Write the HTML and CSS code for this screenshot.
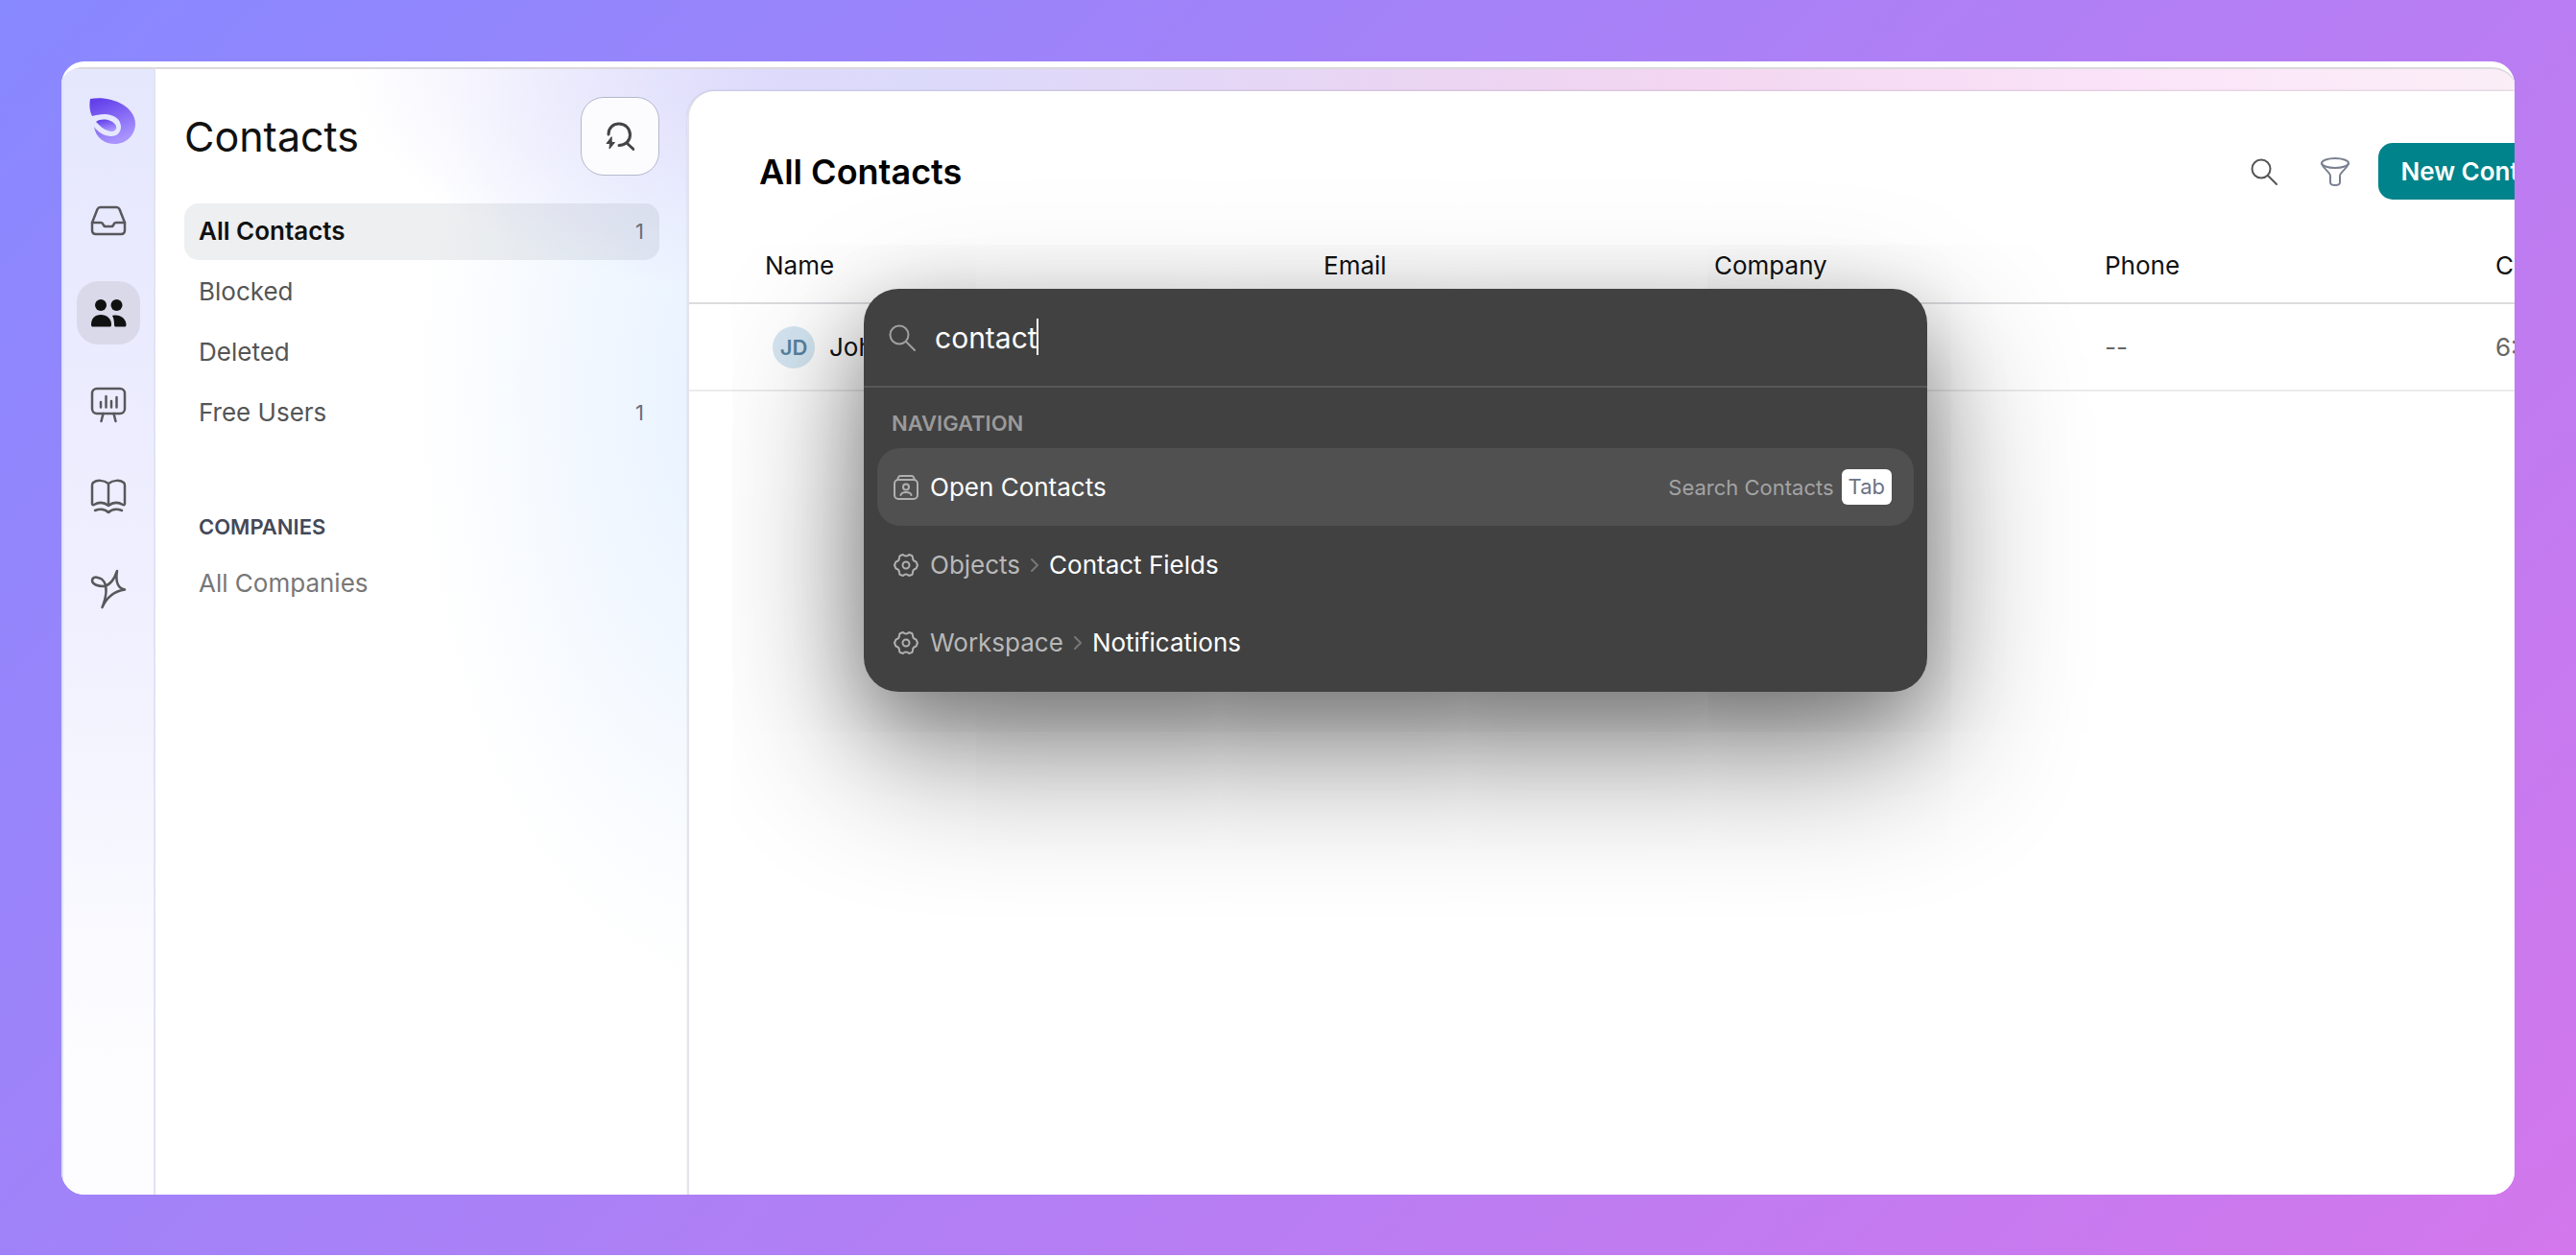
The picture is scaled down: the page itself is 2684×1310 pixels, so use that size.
FILE: index.html
```html
<!DOCTYPE html>
<html lang="en">
<head>
    <meta charset="UTF-8">
    <meta name="viewport" content="width=device-width, initial-scale=1.0">
    <title>Contacts</title>
    <link rel="stylesheet" href="styles.css">
</head>
<body>
    <div class="window">
        <nav class="rail" aria-label="Main">
            <a class="logo" href="#" aria-label="Home">
                <svg width="48" height="48" viewBox="0 0 48 48">
                    <defs>
                        <linearGradient id="logo-fill" x1="0" y1="0" x2="0.4" y2="1">
                            <stop offset="0.1" stop-color="#6340ea"/>
                            <stop offset="1" stop-color="#a893ff"/>
                        </linearGradient>
                    </defs>
                    <path fill="url(#logo-fill)" d="M1 1C12-1 25 1 35 7C43 12 48 19 48 27C48 39 38 48 27 48C16 48 7 42 5 30C9 36 16 40 23 40C29 40 33 36 33 30C33 22 25 17 16 17C11 17 7 18 3 19C0 13 0 6 1 1Z"/>
                    <path fill="url(#logo-fill)" d="M7 25C11 22 17 22 22 24C27 26 29 30 28 32C27 35 23 36 19 34C15 33 11 29 7 25Z"/>
                </svg>
            </a>
            <a class="rail-link" href="#" aria-label="Inbox">
                <svg width="38" height="38" viewBox="0 0 38 38">
                    <path d="M10.500 5H27.500C29 5 30 6 30.500 7L36 21V29C36 31.500 34.500 33 32 33H6C3.500 33 2 31.500 2 29V21L7.500 7C8 6 9 5 10.500 5Z"/>
                    <path d="M2 21H11C12.500 21 13 21.500 13.500 23C14 24.500 14.500 25 16 25H22C23.500 25 24 24.500 24.500 23C25 21.500 25.500 21 27 21H36"/>
                </svg>
            </a>
            <a class="rail-link active" href="#" aria-label="Contacts">
                <svg class="solid" width="38" height="38" viewBox="0 0 38 38">
                    <circle cx="11" cy="11" r="6"/>
                    <circle cx="27.500" cy="11" r="6"/>
                    <path d="M1 31C1 25 5 21 11 21C17 21 22 25 22 31C22 33 21.500 33.500 20 33.500H3C1.500 33.500 1 33 1 31Z"/>
                    <path d="M23 22C31 20 37 25 37.500 31C37.500 33 37 33.500 35.500 33.500H27C25.500 33.500 25 33 25 31C25 28 24.500 24.500 23 22Z"/>
                </svg>
            </a>
            <a class="rail-link" href="#" aria-label="Reports">
                <svg width="38" height="38" viewBox="0 0 38 38">
                    <rect x="2" y="2" width="34" height="26" rx="5"/>
                    <path d="M13.500 28L11.500 36M24.500 28L26.500 36M11 16V21.500M16.500 10V21.500M22 15V21.500M27.500 11V21.500"/>
                </svg>
            </a>
            <a class="rail-link" href="#" aria-label="Help center">
                <svg width="38" height="38" viewBox="0 0 38 38">
                    <path d="M19 5V28M19 5C14 1 7 1 3 4C2 5 2 5.500 2 7V26C2 27 3 27.500 4 27C9 24 14 24 19 28C24 24 29 24 34 27C35 27.500 36 27 36 26V7C36 5.500 36 5 35 4C31 1 24 1 19 5Z"/>
                    <path d="M5 33C10 31 15 31 19 35C23 31 28 31 33 33"/>
                </svg>
            </a>
            <a class="rail-link" href="#" aria-label="Assistant">
                <svg width="38" height="42" viewBox="0 0 38 42">
                    <path d="M28 2C25 11 21 17 14 18C8 18 2 16 2 12C2 9 5 8 8 9C14 10 17 16 16.500 24C16 31 14 36 12.500 40C17 30 25 23 36 21.500C29 20 26 14 28 2Z"/>
                </svg>
            </a>
        </nav>

        <aside class="sidebar">
            <div class="sidebar-head">
                <h1>Contacts</h1>
                <button class="quick-search" type="button" aria-label="Quick search">
                    <svg width="30" height="30" viewBox="0 0 30 30">
                        <path d="M3 13C3 6 8 2 14 2C20.500 2 25.500 7 25.500 13.500C25.500 20 20.500 24.500 14 24.500M22 22L29 28.500"/>
                        <path class="bolt" d="M6 16L1 22.500H4.500L4 28L9.500 21.500H6.500Z"/>
                    </svg>
                </button>
            </div>
            <ul class="lists">
                <li><a class="list-link active" href="#">All Contacts <span class="count">1</span></a></li>
                <li><a class="list-link" href="#">Blocked</a></li>
                <li><a class="list-link" href="#">Deleted</a></li>
                <li><a class="list-link" href="#">Free Users <span class="count">1</span></a></li>
            </ul>
            <h2>COMPANIES</h2>
            <ul class="lists">
                <li><a class="list-link muted" href="#">All Companies</a></li>
            </ul>
        </aside>

        <main class="panel">
            <div class="panel-head">
                <h2>All Contacts</h2>
                <button class="icon-button" type="button" aria-label="Search">
                    <svg width="30" height="30" viewBox="0 0 30 30">
                        <circle cx="12" cy="12" r="9.500"/>
                        <path d="M19 19L28 28"/>
                    </svg>
                </button>
                <button class="icon-button filter" type="button" aria-label="Filter">
                    <svg width="30" height="30" viewBox="0 0 30 30">
                        <ellipse cx="15" cy="6" rx="14" ry="5"/>
                        <path d="M1 6C1 10 10 16 10 19V26C10 28 12 29 15 29C18 29 20 28 20 26V19C20 16 29 10 29 6"/>
                    </svg>
                </button>
                <button class="new-contact" type="button">New Contact</button>
            </div>
            <table class="contacts">
                <thead>
                    <tr>
                        <th class="name-col">Name</th>
                        <th>Email</th>
                        <th>Company</th>
                        <th>Phone</th>
                        <th>Created</th>
                    </tr>
                </thead>
                <tbody>
                    <tr>
                        <td class="name-col"><div class="person"><span class="avatar">JD</span>John Doe</div></td>
                        <td></td>
                        <td></td>
                        <td>--</td>
                        <td>6:24 PM</td>
                    </tr>
                </tbody>
            </table>
        </main>

        <div class="palette" role="dialog" aria-label="Command palette">
            <label class="palette-search">
                <svg width="28" height="28" viewBox="0 0 28 28">
                    <circle cx="11" cy="11" r="9.500"/>
                    <path d="M18 18L27 27"/>
                </svg>
                <input type="text" id="palette-input" value="contact" aria-label="Search commands">
                <span class="caret"></span>
            </label>
            <div class="palette-body">
                <h3>NAVIGATION</h3>
                <a class="result selected" href="#">
                    <svg width="26" height="26" viewBox="0 0 26 26">
                        <path d="M4 5L5 2.500C5.500 1.500 6 1 7 1H19C20 1 20.500 1.500 21 2.500L22 5"/>
                        <rect x="1" y="5" width="24" height="20" rx="4"/>
                        <circle cx="13" cy="12.500" r="3"/>
                        <path d="M7.500 21C8 18.500 10 18 13 18C16 18 18 18.500 18.500 21"/>
                    </svg>
                    <span>Open Contacts</span>
                    <span class="hint">Search Contacts</span>
                    <kbd>Tab</kbd>
                </a>
                <a class="result" href="#">
                    <svg width="26" height="26" viewBox="0 0 26 26">
                        <path d="M10 2C11.500 4 14.500 4 16 2L19 3C20 3.500 20 4 20 5.500C20 7.500 21 9 23.500 9.500L25 13L23.500 16.500C21 17 20 18.500 20 20.500C20 22 20 22.500 19 23L16 24C14.500 22 11.500 22 10 24L7 23C6 22.500 6 22 6 20.500C6 18.500 5 17 2.500 16.500L1 13L2.500 9.500C5 9 6 7.500 6 5.500C6 4 6 3.500 7 3Z"/>
                        <circle cx="13" cy="13" r="3.500"/>
                    </svg>
                    <span class="parent">Objects</span>
                    <svg class="chevron" width="8" height="14" viewBox="0 0 8 14"><path d="M1 1L7 7L1 13"/></svg>
                    <span>Contact Fields</span>
                </a>
                <a class="result" href="#">
                    <svg width="26" height="26" viewBox="0 0 26 26">
                        <path d="M10 2C11.500 4 14.500 4 16 2L19 3C20 3.500 20 4 20 5.500C20 7.500 21 9 23.500 9.500L25 13L23.500 16.500C21 17 20 18.500 20 20.500C20 22 20 22.500 19 23L16 24C14.500 22 11.500 22 10 24L7 23C6 22.500 6 22 6 20.500C6 18.500 5 17 2.500 16.500L1 13L2.500 9.500C5 9 6 7.500 6 5.500C6 4 6 3.500 7 3Z"/>
                        <circle cx="13" cy="13" r="3.500"/>
                    </svg>
                    <span class="parent">Workspace</span>
                    <svg class="chevron" width="8" height="14" viewBox="0 0 8 14"><path d="M1 1L7 7L1 13"/></svg>
                    <span>Notifications</span>
                </a>
            </div>
        </div>
    </div>
</body>
</html>
```
FILE: styles.css
```css
* {
    margin: 0;
    padding: 0;
    box-sizing: border-box;
}

body {
    height: 100vh;
    padding: 64px 64px 63px;
    overflow: hidden;
    display: flex;
    font-family: Inter, "Liberation Sans", sans-serif;
    font-size: 26px;
    line-height: 32px;
    color: #111;
    background: linear-gradient(135deg, #8888ff, #d377ec);
    border-bottom: 2px solid #fff;
}

a {
    color: inherit;
    text-decoration: none;
}

button {
    font: inherit;
    border: none;
    background: none;
    cursor: pointer;
}

svg {
    display: block;
    flex: none;
    fill: none;
    stroke: currentColor;
    stroke-width: 2;
    stroke-linecap: round;
    stroke-linejoin: round;
}

ul {
    list-style: none;
}

.window {
    position: relative;
    flex: 1;
    min-width: 0;
    display: flex;
    overflow: hidden;
    border-radius: 24px;
    border-top: 6px solid #fff;
    box-shadow: inset 0 2px #dcd9dc;
    background:
        linear-gradient(90deg, rgba(220, 217, 251, 0) 653px, #dcdafb 900px, #ead5f3 1400px, #f3d6f1 1700px, #fbe5f9 2200px, #fbeef7) top / 100% 60px no-repeat,
        radial-gradient(ellipse 480px 240px at 780px 0, #dcd8fb, rgba(220, 216, 251, 0) 100%),
        radial-gradient(ellipse 330px 620px at 700px 340px, #e6f1ff, rgba(230, 241, 255, 0) 100%),
        #fff;
}

/* Icon rail */
.rail {
    width: 98px;
    flex: none;
    display: flex;
    flex-direction: column;
    align-items: center;
    gap: 30px;
    padding-top: 30px;
    color: #58585c;
    border-top: 2px solid #dbd9dc;
    border-left: 2px solid #dde3fb;
    border-right: 2px solid #e1e3f3;
    background: linear-gradient(#e5e7fd, #efefff 45%, #fdfdff 88%);
}

.logo {
    margin: 0 0 17px 8px;
}

.logo svg {
    stroke: none;
}

.rail-link {
    width: 66px;
    height: 66px;
    display: flex;
    align-items: center;
    justify-content: center;
    border-radius: 22px;
}

.rail-link svg {
    stroke-width: 2.5;
}

.rail-link.active {
    color: #111;
    background: #d9d9ea;
}

.rail-link .solid {
    fill: currentColor;
    stroke: none;
}

/* Lists sidebar */
.sidebar {
    width: 554px;
    flex: none;
    padding: 31px 29px 0 30px;
}

.sidebar-head {
    display: flex;
    align-items: center;
    justify-content: space-between;
    margin-bottom: 29px;
}

.sidebar h1 {
    font-size: 43px;
    line-height: 48px;
    font-weight: 400;
}

.quick-search {
    width: 82px;
    height: 82px;
    display: flex;
    align-items: center;
    justify-content: center;
    color: #444;
    border: 1px solid #b4b9cb;
    border-radius: 24px;
    background: #fcfcff;
}

.quick-search svg {
    stroke-width: 3;
}

.quick-search .bolt {
    fill: currentColor;
    stroke-width: 1;
}

.lists {
    display: flex;
    flex-direction: column;
    gap: 4px;
}

.list-link {
    display: flex;
    align-items: center;
    justify-content: space-between;
    height: 59px;
    padding: 0 16px 2px 15px;
    color: #555;
    border-radius: 15px;
}

.list-link.active {
    color: #111;
    font-weight: 600;
    background: rgba(20, 25, 40, 0.07);
}

.list-link.muted {
    color: #777;
}

.count {
    font-size: 22px;
    font-weight: 400;
    color: #6c6e76;
}

.sidebar h2 {
    margin: 73px 0 14px 15px;
    font-size: 22px;
    line-height: 32px;
    font-weight: 600;
    color: #444857;
}

/* Contacts table */
.panel {
    flex: 1;
    min-width: 0;
    margin-top: 25px;
    overflow: hidden;
    border-left: 2px solid #e3e4ec;
    border-radius: 28px 0 0 0;
    background: #fff;
    box-shadow: 0 -1px 2px rgba(0, 0, 0, 0.12);
}

.panel-head {
    display: flex;
    align-items: center;
    width: 2029px;
    padding: 54px 60px 0 73px;
}

.panel-head h2 {
    flex: 1;
    font-size: 36px;
    line-height: 40px;
    font-weight: 600;
    color: #000;
}

.icon-button {
    margin-right: 44px;
    color: #555;
}

.icon-button.filter {
    margin-right: 30px;
    color: #7a8091;
}

.new-contact {
    height: 59px;
    padding: 0 23px;
    font-weight: 600;
    white-space: nowrap;
    color: #fff;
    border-radius: 15px;
    background: #00838a;
}

.contacts {
    width: 2289px;
    margin-top: 31px;
    table-layout: fixed;
    border-collapse: collapse;
    text-align: left;
}

.contacts th {
    width: 407px;
    height: 77px;
    font-weight: 400;
    border-bottom: 2px solid #dcdcdf;
}

.contacts td {
    height: 91px;
    color: #666;
    border-bottom: 2px solid #ececef;
}

.contacts .name-col {
    width: 661px;
    padding-left: 79px;
}

.person {
    display: flex;
    align-items: center;
    gap: 15px;
    padding-left: 8px;
    color: #111;
}

.avatar {
    width: 44px;
    height: 44px;
    font-size: 22px;
    line-height: 44px;
    font-weight: 600;
    text-align: center;
    color: #5683a3;
    border-radius: 50%;
    background: #d4e6f2;
}

/* Command palette */
.palette {
    position: absolute;
    top: 231px;
    left: 836px;
    width: 1108px;
    border-radius: 36px;
    color: #fff;
    background: #414141;
    box-shadow: 0 60px 160px rgba(0, 0, 0, 0.45), 0 30px 80px rgba(0, 0, 0, 0.25);
}

.palette-search {
    position: relative;
    display: flex;
    align-items: center;
    gap: 20px;
    height: 103px;
    padding: 0 26px;
    color: #a0a0a0;
    border-bottom: 2px solid #585858;
}

.palette-search input {
    flex: 1;
    font: inherit;
    font-size: 30px;
    line-height: 36px;
    color: #fff;
    border: none;
    outline: none;
    background: none;
}

/* sits right after the typed text */
.caret {
    position: absolute;
    top: 31px;
    left: 180px;
    width: 2px;
    height: 38px;
    background: #fff;
}

.palette-body {
    padding: 21px 14px 11px;
}

.palette h3 {
    margin: 0 15px 10px;
    font-size: 22px;
    line-height: 32px;
    font-weight: 600;
    color: #9a9a9a;
}

.result {
    display: flex;
    align-items: center;
    gap: 12px;
    height: 81px;
    padding: 0 23px 0 17px;
    border-radius: 24px;
}

.result.selected {
    background: #505050;
}

.result svg {
    color: #b0b0b0;
}

.result .chevron {
    margin: 0 -1px;
    color: #777;
}

.parent {
    color: #b8b8b8;
}

.hint {
    margin-left: auto;
    font-size: 22px;
    color: #a3a3a3;
}

kbd {
    height: 37px;
    padding: 0 7px;
    margin-left: -4px;
    font-family: inherit;
    font-size: 22px;
    line-height: 37px;
    color: #6b7385;
    border-radius: 6px;
    background: #fff;
}
```
